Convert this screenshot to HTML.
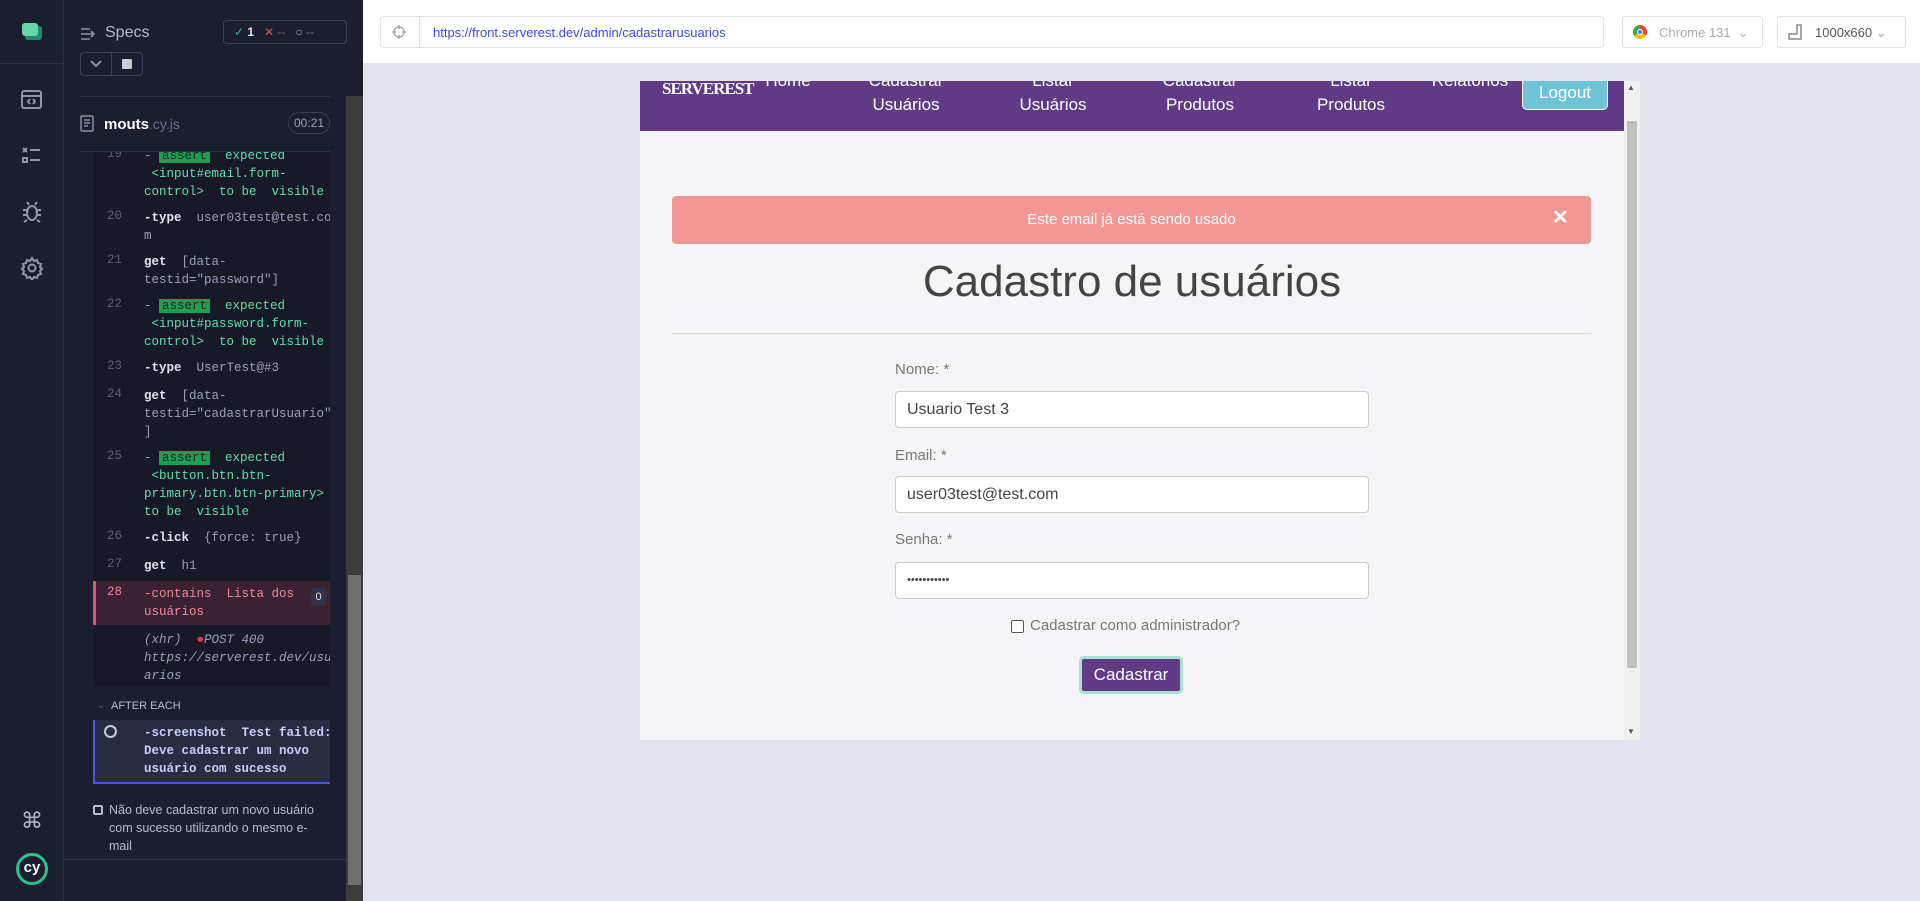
<!DOCTYPE html>
<html><head><meta charset="utf-8"><style>
*{box-sizing:border-box;margin:0;padding:0}
body{width:1920px;height:901px;overflow:hidden;background:#e1e3ed;font-family:"Liberation Sans",sans-serif;position:relative}
.a{position:absolute}
.mono{font-family:"Liberation Mono",monospace;font-size:12.5px}
.ln{position:absolute;left:107px;color:#5a5f7a;font-family:"Liberation Mono",monospace;font-size:12.5px}
.tx{position:absolute;left:144px;line-height:18px;white-space:pre;font-family:"Liberation Mono",monospace;font-size:12.5px;color:#9aa0b8}
.w{color:#e1e3ed;font-weight:bold}
.g{color:#5fe0a8}
.ab{background:#1f9d55;color:#0f2a1e;padding:0 3px}
.nav{position:absolute;color:#fff;font-size:17px;text-align:center;line-height:24px}
.lbl{position:absolute;left:895px;color:#777;font-size:15px}
.inp{position:absolute;left:895px;width:474px;height:37px;background:#fff;border:1px solid #ccc;border-radius:4px;font-size:16px;color:#444;padding:9px 11px}
</style></head><body>
<!-- icon bar -->
<div class="a" style="left:0;top:0;width:64px;height:901px;background:#1b1e2e;border-right:1px solid #2a2e42"></div>
<div class="a" style="left:0;top:63px;width:64px;height:1px;background:#2a2e42"></div>
<div class="a" style="left:25px;top:26px;width:17px;height:14px;background:#1e8c6b;border-radius:3px"></div>
<div class="a" style="left:22px;top:23px;width:16px;height:13px;background:#69d3a7;border-radius:3px"></div>
<svg class="a" style="left:20px;top:88px" width="24" height="24" fill="none" stroke="#9095ad" stroke-width="2"><rect x="2" y="3" width="19" height="17" rx="2"/><path d="M2 8h19M10 11l-2 2.5 2 2.5M13 11l2 2.5-2 2.5"/></svg>
<svg class="a" style="left:20px;top:144px" width="24" height="24" fill="none" stroke="#9095ad" stroke-width="2"><path d="M3 4l4 4M7 4l-4 4M10 6h10"/><rect x="3" y="14" width="4" height="4"/><path d="M10 16h10"/></svg>
<svg class="a" style="left:20px;top:200px" width="24" height="24" fill="none" stroke="#9095ad" stroke-width="2"><ellipse cx="12" cy="13" rx="5" ry="7"/><path d="M7 10H3M17 10h4M7 15H3M17 15h4M7 20l-3 2M17 20l3 2M9 5l-2-3M15 5l2-3"/></svg>
<svg class="a" style="left:20px;top:256px" width="24" height="24" fill="none" stroke="#9095ad" stroke-width="2"><circle cx="12" cy="12" r="3.5"/><path d="M12 2l2 3 3-1 1 3 3 1-1 3 2 2-2 2 1 3-3 1-1 3-3-1-2 3-2-3-3 1-1-3-3-1 1-3-2-2 2-2-1-3 3-1 1-3 3 1z"/></svg>
<div class="a" style="left:21px;top:808px;color:#b0b4c8;font-size:22px">⌘</div>
<div class="a" style="left:16px;top:853px;width:32px;height:32px;border:3px solid #2fbf8f;border-radius:50%;color:#fff;font-size:15px;font-weight:bold;text-align:center;line-height:24px">cy</div>
<!-- panel -->
<div class="a" style="left:64px;top:0;width:299px;height:901px;background:#1b1e2e"></div>
<div class="a" style="left:93px;top:151px;width:237px;height:536px;background:#171927"></div>
<svg class="a" style="left:80px;top:26px" width="18" height="16" fill="none" stroke="#8a8fa8" stroke-width="1.6"><path d="M1 3h9M1 8h13M1 13h9M11 5l3 3-3 3"/></svg>
<div class="a" style="left:105px;top:24px;color:#b8bccf;font-size:16px">Specs</div>
<div class="a" style="left:223px;top:20px;width:124px;height:24px;border:1px solid #3a3f58;border-radius:4px;font-size:12px;line-height:22px;padding-left:10px;color:#6b7090"><span style="color:#2fbf8f">✓</span> <b style="color:#e1e3ed">1</b> &nbsp; <span style="color:#e2566a">✕</span> -- &nbsp; <span style="color:#aaa">○</span> --</div>
<div class="a" style="left:80px;top:52px;width:63px;height:24px;border:1px solid #3a3f58;border-radius:4px"></div>
<div class="a" style="left:111px;top:52px;width:1px;height:24px;background:#3a3f58"></div>
<svg class="a" style="left:89px;top:58px" width="14" height="12" fill="none" stroke="#8a8fa8" stroke-width="2"><path d="M2 3l5 5 5-5"/></svg>
<div class="a" style="left:122px;top:59px;width:10px;height:10px;background:#c8cbd8;border-radius:1px"></div>
<div class="a" style="left:80px;top:96px;width:250px;height:1px;background:#2e3248"></div>
<svg class="a" style="left:80px;top:115px" width="14" height="17" fill="none" stroke="#8a8fa8" stroke-width="1.5"><rect x="1" y="1" width="12" height="15" rx="1"/><path d="M4 5h6M4 8h6M4 11h4"/></svg>
<div class="a" style="left:104px;top:116px;color:#fff;font-size:15px;font-weight:bold">mouts<span style="color:#6b7090;font-weight:normal;font-size:14px">.cy.js</span></div>
<div class="a" style="left:288px;top:112px;width:42px;height:22px;border:1px solid #3a3f58;border-radius:11px;color:#9aa0b8;font-size:12px;line-height:20px;text-align:center">00:21</div>
<div class="a" style="left:80px;top:151px;width:250px;height:1px;background:#2e3248"></div>
<div class="a" style="left:93px;top:152px;width:237px;height:536px;overflow:hidden">
<div style="position:relative;left:-93px;top:-152px">
<div class="ln" style="top:147px">19</div><div class="tx" style="top:147px">- <span class="ab">assert</span>  <span class="g">expected</span>
<span class="g"> &lt;input#email.form-</span>
<span class="g">control&gt;  to be  visible</span></div>
<div class="ln" style="top:209px">20</div><div class="tx" style="top:209px"><span class="w">-type</span>  user03test@test.co
m</div>
<div class="ln" style="top:253px">21</div><div class="tx" style="top:253px"><span class="w">get</span>  [data-
testid="password"]</div>
<div class="ln" style="top:297px">22</div><div class="tx" style="top:297px">- <span class="ab">assert</span>  <span class="g">expected</span>
<span class="g"> &lt;input#password.form-</span>
<span class="g">control&gt;  to be  visible</span></div>
<div class="ln" style="top:359px">23</div><div class="tx" style="top:359px"><span class="w">-type</span>  UserTest@#3</div>
<div class="ln" style="top:387px">24</div><div class="tx" style="top:387px"><span class="w">get</span>  [data-
testid="cadastrarUsuario"
]</div>
<div class="ln" style="top:449px">25</div><div class="tx" style="top:449px">- <span class="ab">assert</span>  <span class="g">expected</span>
<span class="g"> &lt;button.btn.btn-</span>
<span class="g">primary.btn.btn-primary&gt;</span>
<span class="g">to be  visible</span></div>
<div class="ln" style="top:529px">26</div><div class="tx" style="top:529px"><span class="w">-click</span>  {force: true}</div>
<div class="ln" style="top:557px">27</div><div class="tx" style="top:557px"><span class="w">get</span>  h1</div>
<div class="a" style="left:93px;top:581px;width:237px;height:44px;background:#3a2233;border-left:3px solid #e2566a"></div>
<div class="ln" style="top:585px;color:#f08a9a">28</div><div class="tx" style="top:585px;color:#f08a9a">-contains  Lista dos
usuários</div>
<div class="a" style="left:311px;top:588px;width:15px;height:18px;background:#2e3248;border-radius:3px;color:#ddd;font-size:11px;text-align:center;line-height:18px">0</div>
<div class="tx" style="top:631px;font-style:italic">(xhr)  <span style="color:#e2334e">●</span>POST 400
https://serverest.dev/usu
arios</div>
</div></div>
<div class="a" style="left:97px;top:700px;color:#5a5f7a;font-size:10px">⌄</div>
<div class="a" style="left:111px;top:700px;color:#b8bccf;font-size:11px">AFTER EACH</div>
<div class="a" style="left:93px;top:720px;width:237px;height:64px;background:#282c40;border-left:2px solid #4956e3;border-bottom:2px solid #4956e3"></div>
<div class="a" style="left:104px;top:725px;width:13px;height:13px;border:2px solid #c8cbd8;border-radius:50%"></div>
<div class="tx" style="top:724px;color:#c8ccf8;font-weight:bold">-screenshot  Test failed:
Deve cadastrar um novo
usuário com sucesso</div>
<div class="a" style="left:93px;top:805px;width:10px;height:10px;border:2px solid #b8bccf;border-radius:2px"></div>
<div class="a" style="left:109px;top:801px;width:220px;color:#b8bccf;font-size:12.5px;line-height:18px">Não deve cadastrar um novo usuário com sucesso utilizando o mesmo e-mail</div>
<div class="a" style="left:64px;top:859px;width:282px;height:1px;background:#2e3248"></div>
<div class="a" style="left:346px;top:96px;width:17px;height:805px;background:#3c3c3c"></div>
<div class="a" style="left:348px;top:575px;width:13px;height:310px;background:#6e6e6e"></div>
<!-- top bar -->
<div class="a" style="left:363px;top:0;width:1557px;height:63px;background:#fff"></div>
<div class="a" style="left:380px;top:16px;width:1224px;height:32px;border:1px solid #dcdfe8;border-radius:4px"></div>
<div class="a" style="left:419px;top:16px;width:1px;height:32px;background:#dcdfe8"></div>
<svg class="a" style="left:391px;top:24px" width="16" height="16" fill="none" stroke="#aaa" stroke-width="1.5"><circle cx="8" cy="8" r="5"/><path d="M8 1v4M8 11v4M1 8h4M11 8h4"/></svg>
<div class="a" style="left:433px;top:25px;color:#3f4ad8;font-size:13px">https://front.serverest.dev/admin/cadastrarusuarios</div>
<div class="a" style="left:1622px;top:16px;width:141px;height:32px;border:1px solid #dcdfe8;border-radius:4px;color:#aaa;font-size:13px;padding:8px 0 0 36px">Chrome 131 &nbsp;⌄</div>
<div class="a" style="left:1633px;top:25px;width:14px;height:14px;border-radius:50%;background:conic-gradient(#e94235 0 33%,#fbbc04 0 66%,#34a853 0);"></div>
<div class="a" style="left:1637px;top:29px;width:6px;height:6px;border-radius:50%;background:#4285f4;border:1px solid #fff"></div>
<div class="a" style="left:1777px;top:16px;width:129px;height:32px;border:1px solid #dcdfe8;border-radius:4px;color:#555;font-size:13px;padding:8px 0 0 37px">1000x660 <span style="color:#aaa">⌄</span></div>
<svg class="a" style="left:1788px;top:24px" width="14" height="16" fill="none" stroke="#888" stroke-width="1.5"><path d="M1 15h12V1H9v9H1z"/></svg>
<!-- app iframe -->
<div class="a" style="left:640px;top:81px;width:1000px;height:659px;background:#f5f5f7;overflow:hidden">
<div class="a" style="left:0;top:0;width:984px;height:50px;background:#613a85"></div>
<div class="a" style="left:22px;top:-2px;color:#fff;font-size:17px;font-weight:bold;font-family:'Liberation Serif',serif;letter-spacing:-1px">SERVEREST</div>
<div class="nav" style="left:118px;top:-12px;width:60px">Home</div>
<div class="nav" style="left:216px;top:-12px;width:100px">Cadastrar<br>Usuários</div>
<div class="nav" style="left:363px;top:-12px;width:100px">Listar<br>Usuários</div>
<div class="nav" style="left:510px;top:-12px;width:100px">Cadastrar<br>Produtos</div>
<div class="nav" style="left:661px;top:-12px;width:100px">Listar<br>Produtos</div>
<div class="nav" style="left:785px;top:-12px;width:90px">Relatórios</div>
<div class="a" style="left:882px;top:-8px;width:86px;height:37px;background:#6ec4d6;border:1px solid #fff;border-radius:5px;color:#fff;font-size:17px;text-align:center;line-height:37px">Logout</div>
<div class="a" style="left:0;top:50px;width:984px;height:610px;background:#f5f5f7;border-radius:8px 0 0 0"></div>
<div class="a" style="left:32px;top:115px;width:919px;height:48px;background:#f29696;border-radius:4px;color:#fff;font-size:15px;text-align:center;line-height:48px">Este email já está sendo usado</div>
<div class="a" style="left:912px;top:124px;color:#fff;font-size:20px;font-weight:bold">✕</div>
<div class="a" style="left:0;top:176px;width:984px;text-align:center;color:#444;font-size:44px">Cadastro de usuários</div>
<div class="a" style="left:32px;top:252px;width:919px;height:1px;background:#ddd"></div>
<div class="lbl" style="left:255px;top:280px">Nome: *</div>
<div class="inp" style="left:255px;top:310px">Usuario Test 3</div>
<div class="lbl" style="left:255px;top:366px">Email: *</div>
<div class="inp" style="left:255px;top:395px">user03test@test.com</div>
<div class="lbl" style="left:255px;top:450px">Senha: *</div>
<div class="inp" style="left:255px;top:481px;font-size:11px;padding-top:11px">•••••••••••</div>
<div class="a" style="left:371px;top:539px;width:13px;height:13px;border:1px solid #555;border-radius:2px;background:#fff"></div>
<div class="a" style="left:390px;top:536px;color:#777;font-size:15px">Cadastrar como administrador?</div>
<div class="a" style="left:439px;top:575px;width:104px;height:38px;border:3px solid #a5e0d0;border-radius:5px;background:#613a85;color:#fff;font-size:17px;text-align:center;line-height:32px">Cadastrar</div>
<div class="a" style="left:984px;top:0;width:16px;height:659px;background:#f0f0f0"></div>
<div class="a" style="left:987px;top:40px;width:10px;height:547px;background:#c1c1c1"></div>
<div class="a" style="left:987px;top:2px;color:#555;font-size:8px">▲</div>
<div class="a" style="left:987px;top:646px;color:#555;font-size:8px">▼</div>
</div>
</body></html>
